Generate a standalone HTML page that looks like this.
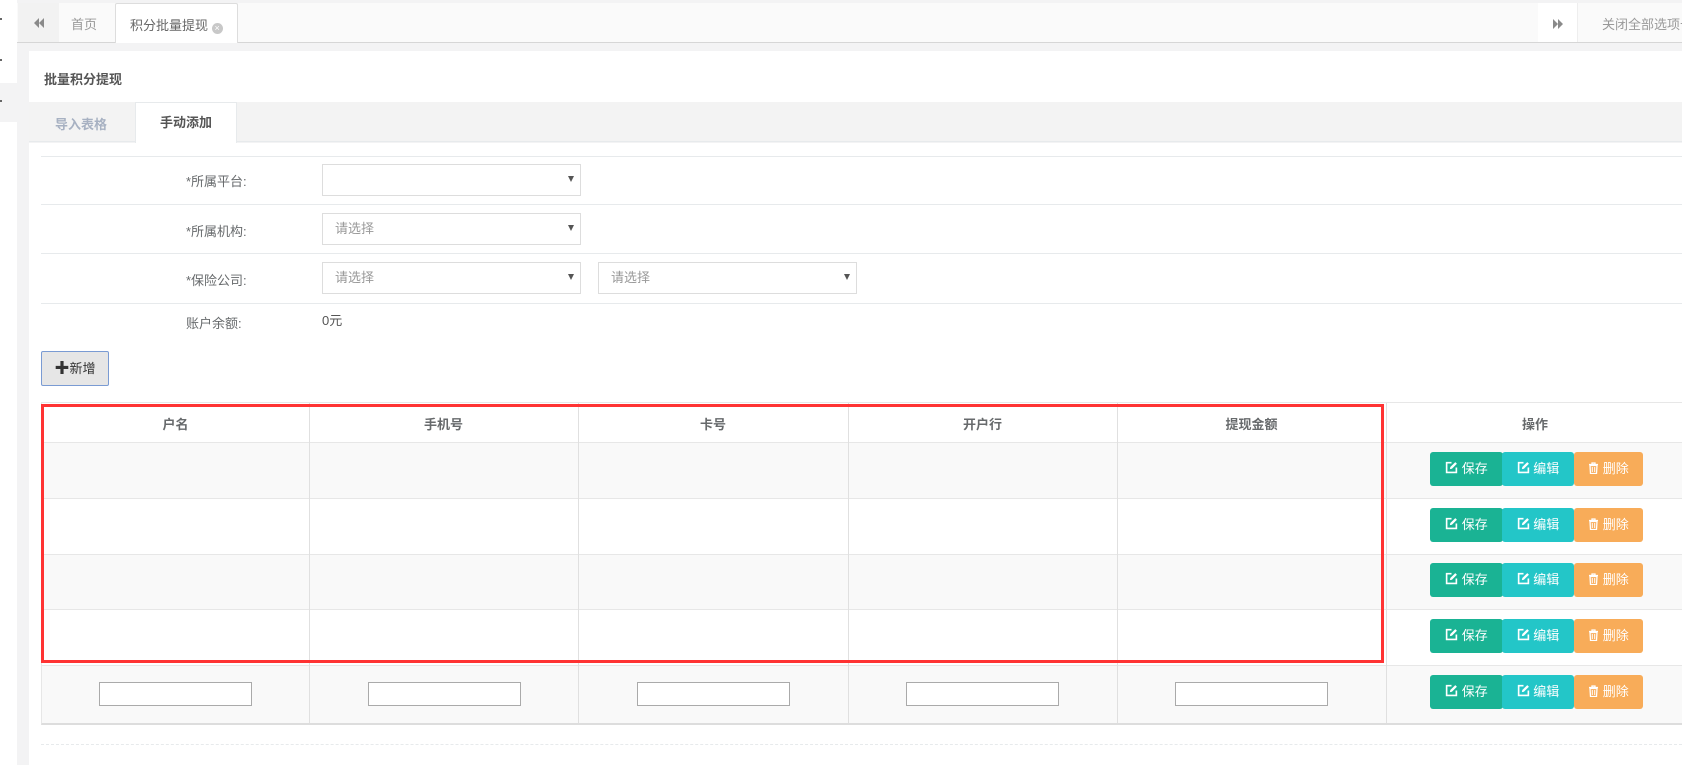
<!DOCTYPE html>
<html><head><meta charset="utf-8"><style>
*{box-sizing:border-box;margin:0;padding:0}
body{width:1682px;height:765px;overflow:hidden;background:#f3f3f4;font-family:"Liberation Sans","Noto Sans CJK SC",sans-serif;font-size:13px;color:#676a6c;position:relative}
.a{position:absolute}
.sel{position:absolute;background:#fff;border:1px solid #ddd;height:32px;color:#999;font-size:13px;line-height:30px;padding-left:12px}
.sel:after{content:"";position:absolute;right:6px;top:11px;border-left:3px solid transparent;border-right:3px solid transparent;border-top:6px solid #555}
.lbl{position:absolute;left:186px;width:62px;font-size:13px;color:#676a6c}
.hl{position:absolute;left:41px;right:0;height:1px;background:#e7eaec}
.btn{position:absolute;height:34px;color:#fff;font-size:13px;line-height:34px;text-align:center;border-radius:3px}
.s{background:#1ab394}.e{background:#23c6c8}.d{background:#f8ac59}
.inp{position:absolute;width:153px;height:24px;background:#fff;border:1px solid #aaa}
</style></head><body>
<div class="a" style="left:0;top:0;width:17px;height:765px;background:#fff"></div>
<div class="a" style="left:0;top:83px;width:17px;height:39px;background:#f3f3f4"></div>
<div class="a" style="left:0;top:18px;width:2px;height:2px;background:#666"></div>
<div class="a" style="left:0;top:59px;width:2px;height:2px;background:#666"></div>
<div class="a" style="left:0;top:100px;width:2px;height:2px;background:#666"></div>

<div class="a" style="left:17px;top:3px;right:0;height:40px;background:#fafafa;border-bottom:1px solid #d6d6d6"></div>
<div class="a" style="left:18px;top:3px;width:41px;height:39px;background:#f2f2f2;color:#999;text-align:center;line-height:39px;font-size:12px">
<svg width="12" height="10" viewBox="0 0 12 10" style="vertical-align:middle"><path d="M6 0v10L1 5zM11 0v10L6 5z" fill="#8a8a8a"/></svg></div>
<div class="a" style="left:71px;top:14px;color:#999">首页</div>
<div class="a" style="left:115px;top:3px;width:123px;height:40px;background:#fff;border:1px solid #ddd;border-bottom:none;border-radius:2px 2px 0 0;padding:11px 0 0 14px;color:#666">积分批量提现 <span style="display:inline-block;width:11px;height:11px;border-radius:50%;background:#c8c8c8;color:#fff;font-size:9px;line-height:11px;text-align:center;vertical-align:-1px">×</span></div>
<div class="a" style="left:1538px;top:3px;width:39px;height:39px;background:#fff;text-align:center;line-height:39px">
<svg width="12" height="10" viewBox="0 0 12 10" style="vertical-align:middle"><path d="M1 0v10L6 5zM6 0v10L11 5z" fill="#8a8a8a"/></svg></div>
<div class="a" style="left:1577px;top:3px;width:1px;height:39px;background:#eee"></div>
<div class="a" style="left:1602px;top:14px;color:#999;white-space:nowrap">关闭全部选项卡</div>

<div class="a" style="left:29px;top:51px;right:0;height:51px;background:#fff"></div>
<div class="a" style="left:44px;top:69px;font-weight:bold;color:#555">批量积分提现</div>
<div class="a" style="left:29px;top:102px;right:0;height:40px;background:#f3f3f3;border-bottom:1px solid #e7eaec"></div>
<div class="a" style="left:55px;top:114px;font-weight:bold;color:#a7b1c2">导入表格</div>
<div class="a" style="left:135px;top:102px;width:102px;height:41px;background:#fff;border:1px solid #e7eaec;border-bottom:none;text-align:center;line-height:40px;font-weight:bold;color:#555">手动添加</div>
<div class="a" style="left:29px;top:143px;right:0;height:622px;background:#fff"></div>

<div class="hl" style="top:156px"></div>
<div class="hl" style="top:204px"></div>
<div class="hl" style="top:253px"></div>
<div class="hl" style="top:303px"></div>
<div class="lbl" style="top:171px">*所属平台:</div>
<div class="lbl" style="top:221px">*所属机构:</div>
<div class="lbl" style="top:270px">*保险公司:</div>
<div class="lbl" style="top:313px">账户余额:</div>
<div class="sel" style="left:322px;top:164px;width:259px"></div>
<div class="sel" style="left:322px;top:213px;width:259px">请选择</div>
<div class="sel" style="left:322px;top:262px;width:259px">请选择</div>
<div class="sel" style="left:598px;top:262px;width:259px">请选择</div>
<div class="a" style="left:322px;top:310px;color:#555">0元</div>
<div class="a" style="left:41px;top:351px;width:68px;height:35px;background:#e6e6e6;border:1px solid #7a9bd3;border-radius:2px;text-align:center;line-height:33px;color:#333;font-size:13px"><b style="font-size:15px">✚</b>新增</div>

<div class="a" style="left:41px;top:402px;width:1643px;height:323px;border:1px solid #e7e7e7;border-bottom:2px solid #ddd;background:#fff"></div>
<div class="a" style="left:42px;top:442px;width:1642px;height:56px;background:#f9f9f9"></div>
<div class="a" style="left:42px;top:554px;width:1642px;height:55px;background:#f9f9f9"></div>
<div class="a" style="left:42px;top:665px;width:1642px;height:58px;background:#f9f9f9"></div>
<div class="a" style="left:42px;top:442px;width:1642px;height:1px;background:#e7e7e7"></div>
<div class="a" style="left:42px;top:498px;width:1642px;height:1px;background:#e7e7e7"></div>
<div class="a" style="left:42px;top:554px;width:1642px;height:1px;background:#e7e7e7"></div>
<div class="a" style="left:42px;top:609px;width:1642px;height:1px;background:#e7e7e7"></div>
<div class="a" style="left:42px;top:665px;width:1642px;height:1px;background:#e7e7e7"></div>
<div class="a" style="left:309px;top:403px;width:1px;height:320px;background:#e0e0e0"></div>
<div class="a" style="left:578px;top:403px;width:1px;height:320px;background:#e0e0e0"></div>
<div class="a" style="left:848px;top:403px;width:1px;height:320px;background:#e0e0e0"></div>
<div class="a" style="left:1117px;top:403px;width:1px;height:320px;background:#e0e0e0"></div>
<div class="a" style="left:1386px;top:403px;width:1px;height:320px;background:#e0e0e0"></div>
<div class="a" style="top:414px;left:42px;width:267px;text-align:center;font-weight:bold">户名</div>
<div class="a" style="top:414px;left:309px;width:269px;text-align:center;font-weight:bold">手机号</div>
<div class="a" style="top:414px;left:578px;width:270px;text-align:center;font-weight:bold">卡号</div>
<div class="a" style="top:414px;left:848px;width:269px;text-align:center;font-weight:bold">开户行</div>
<div class="a" style="top:414px;left:1117px;width:269px;text-align:center;font-weight:bold">提现金额</div>
<div class="a" style="top:414px;left:1386px;width:298px;text-align:center;font-weight:bold">操作</div>
<div class="inp" style="left:99px;top:682px"></div>
<div class="inp" style="left:368px;top:682px"></div>
<div class="inp" style="left:637px;top:682px"></div>
<div class="inp" style="left:906px;top:682px"></div>
<div class="inp" style="left:1175px;top:682px"></div>
<div class="a" style="left:41px;top:404px;width:1343px;height:259px;border:3px solid #f33"></div>

<div id="btns"></div>
<div class="a" style="left:41px;top:744px;right:0;border-top:1px dashed #e7eaec"></div>
<script>
var ys=[452,508,563,619,675],h='';
var pen='<svg width="13" height="13" viewBox="0 0 12 12" style="vertical-align:-1px"><path d="M6 1.5H1.5v9h9V6" fill="none" stroke="#fff" stroke-width="1.5"/><path d="M4.5 7.5l.4-2L9.5 1l1.5 1.5-4.6 4.6z" fill="#fff"/></svg>';
var bin='<svg width="11" height="12" viewBox="0 0 11 12" style="vertical-align:-1px"><path d="M1 2.5h9M4 2.5V1h3v1.5M2 3.5h7l-.5 8h-6z" fill="none" stroke="#fff" stroke-width="1.3"/><path d="M4.3 5v5M6.7 5v5" stroke="#fff"/></svg>';
ys.forEach(function(y){h+='<div class="btn s" style="left:1430px;top:'+y+'px;width:73px">'+pen+' 保存</div><div class="btn e" style="left:1502px;top:'+y+'px;width:72px">'+pen+' 编辑</div><div class="btn d" style="left:1574px;top:'+y+'px;width:69px">'+bin+' 删除</div>';});
document.getElementById('btns').innerHTML=h;
</script>
</body></html>
